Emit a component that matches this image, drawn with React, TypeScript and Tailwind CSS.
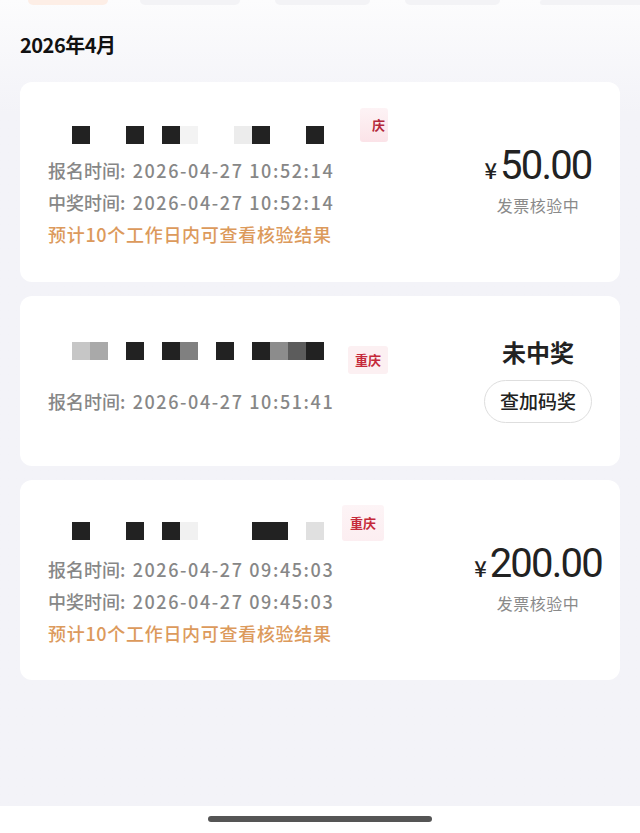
import React from 'react'

type Cell = string | null

const DARK = '#222222'

interface Record {
  cells: Cell[]
  badge: string
  badgeClass: string
  padTop: string
  linesTop: string
  height: string
  lines: [string, string][]
  note?: string
  amount?: string
  status?: string
}

const records: Record[] = [
  {
    cells: [DARK, null, null, DARK, null, DARK, '#f3f3f3', null, null, '#ececec', DARK, null, null, DARK],
    badge: '庆',
    badgeClass: 'ml-[36px] -mt-[18px] h-[34px] w-[28px] justify-end pr-[3px] bg-linear-to-b from-[#fdf3f5] to-[#fbe3e8] text-[#b3283a]',
    padTop: 'pt-[44px]',
    linesTop: 'mt-[10px]',
    height: 'h-[200px]',
    lines: [
      ['报名时间', '2026-04-27 10:52:14'],
      ['中奖时间', '2026-04-27 10:52:14'],
    ],
    note: '预计10个工作日内可查看核验结果',
    amount: '50.00',
    status: '发票核验中',
  },
  {
    cells: ['#c6c6c6', '#a9a9a9', null, DARK, null, DARK, '#808080', null, DARK, null, DARK, '#8c8c8c', '#5c5c5c', DARK],
    badge: '重庆',
    badgeClass: 'ml-[24px] mt-[4px] h-[28px] px-[7px] bg-[#fcf0f2] text-[#c52a3a]',
    padTop: 'pt-[46px]',
    linesTop: 'mt-[25px]',
    height: 'h-[170px]',
    lines: [['报名时间', '2026-04-27 10:51:41']],
  },
  {
    cells: [DARK, null, null, DARK, null, DARK, '#f1f1f1', null, null, null, DARK, DARK, null, '#e0e0e0'],
    badge: '重庆',
    badgeClass: 'ml-[18px] -mt-[17px] h-[36px] px-[8px] bg-linear-to-b from-[#fdf4f6] to-[#fceef1] text-[#c52a3a]',
    padTop: 'pt-[42px]',
    linesTop: 'mt-[13px]',
    height: 'h-[200px]',
    lines: [
      ['报名时间', '2026-04-27 09:45:03'],
      ['中奖时间', '2026-04-27 09:45:03'],
    ],
    note: '预计10个工作日内可查看核验结果',
    amount: '200.00',
    status: '发票核验中',
  },
]

const RecordCard: React.FC<{ r: Record }> = ({ r }) => {
  return (
    <div className={`flex ${r.height} rounded-[12px] bg-white`}>
      <div className={`flex flex-1 flex-col pl-[28px] ${r.padTop}`}>
        <div className="flex h-[18px] items-start pl-[24px]">
          {r.cells.map((c, i) => (
            <div key={i} className="h-[18px] w-[18px]" style={{ backgroundColor: c ?? 'transparent' }} />
          ))}
          <div className={`flex shrink-0 items-center rounded-[3px] text-[13px] font-bold ${r.badgeClass}`}>
            {r.badge}
          </div>
        </div>
        <div className={`flex flex-col ${r.linesTop}`}>
          {r.lines.map(([label, time]) => (
            <div key={label} className="text-[18px] leading-[32px] font-medium text-[#878787]">
              {label}
              <span className="tracking-[1.6px]">: {time}</span>
            </div>
          ))}
          {r.note && (
            <div className="text-[18px] leading-[32px] font-medium tracking-[0.7px] text-[#dc9a5c]">{r.note}</div>
          )}
        </div>
      </div>
      <div className="mr-[12px] flex w-[140px] flex-col items-center justify-center">
        {r.amount ? (
          <div className="flex flex-col items-center pb-[4px]">
            <div className="flex items-baseline text-[#222]">
              <span className="mr-[3px] text-[22px] font-medium">¥</span>
              <span className="font-['Roboto',sans-serif] text-[40px] leading-[44px] tracking-[-1.8px]">
                {r.amount}
              </span>
            </div>
            <div className="mt-[5px] text-[16px] leading-[24px] tracking-[0.5px] text-[#8a8a8a]">{r.status}</div>
          </div>
        ) : (
          <>
            <div className="-mt-[4px] text-[24px] leading-[32px] font-bold text-[#222]">未中奖</div>
            <div className="mt-[12px] flex h-[43px] w-[108px] items-center justify-center rounded-full border border-[#dedede] text-[19px] font-medium text-[#222]">
              查加码奖
            </div>
          </>
        )}
      </div>
    </div>
  )
}

const App: React.FC = () => {
  return (
    <div className="flex h-[833px] w-[640px] flex-col font-['Noto_Sans_CJK_SC',sans-serif]">
      <div className="flex flex-1 flex-col bg-linear-to-b from-[#fcfcfd] from-0% to-[#f3f3f8] to-[14%]">
        <div className="flex h-[5px]">
          <div className="ml-[28px] w-[80px] rounded-b-full bg-[#fdeee6]" />
          <div className="ml-[32px] w-[100px] rounded-b-full bg-[#f3f3f6]" />
          <div className="ml-[35px] w-[95px] rounded-b-full bg-[#f3f3f6]" />
          <div className="ml-[35px] w-[95px] rounded-b-full bg-[#f3f3f6]" />
          <div className="ml-[40px] w-[100px] rounded-l-full bg-[#f3f3f6]" />
        </div>
        <div className="mt-[26px] pl-[20px] text-[20px] leading-[28px] font-bold tracking-[-0.5px] text-[#111]">2026年4月</div>
        <div className="mt-[23px] flex flex-col gap-[14px] px-[20px]">
          {records.map((r, i) => (
            <RecordCard key={i} r={r} />
          ))}
        </div>
      </div>
      <div className="flex h-[27px] items-start justify-center bg-white pt-[10px]">
        <div className="h-[6px] w-[224px] rounded-full bg-[#555]" />
      </div>
    </div>
  )
}

export default App
